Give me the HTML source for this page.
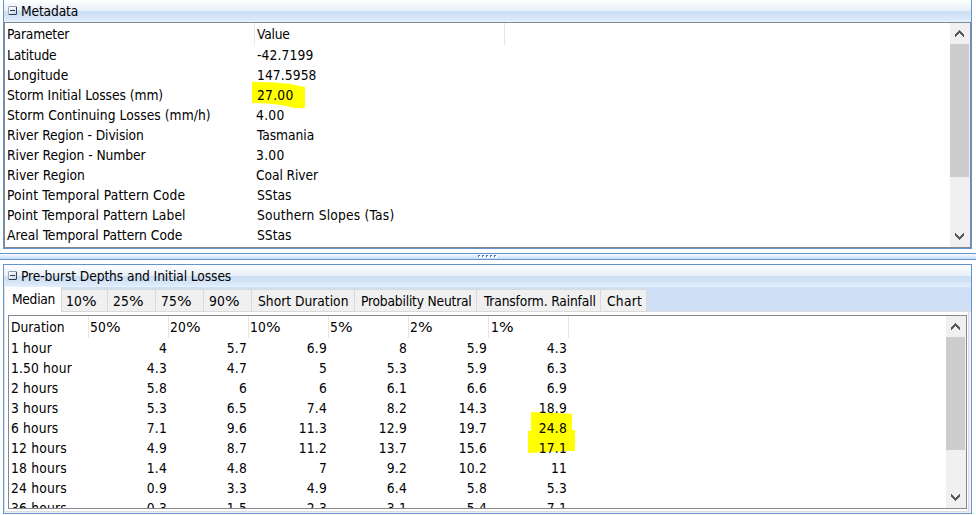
<!DOCTYPE html>
<html lang="en">
<head>
<meta charset="utf-8">
<title>Metadata / Pre-burst Depths and Initial Losses</title>
<style>
html,body{margin:0;padding:0;}
body{width:976px;height:515px;overflow:hidden;background:#fff;position:relative;
  font-family:"DejaVu Sans Condensed","DejaVu Sans","Liberation Sans",sans-serif;font-size:13.7px;font-stretch:condensed;color:#000;letter-spacing:0px;}
div,span,i{box-sizing:border-box;}
.abs{position:absolute;}
.t{position:absolute;white-space:nowrap;line-height:16px;height:16px;}
.r{text-align:right;}
.pc{display:inline-block;transform:scaleX(1.25);transform-origin:0 50%;margin-right:3px;}
.panel{position:absolute;left:3px;width:969px;border:1px solid #6593cf;}
.hdr{position:absolute;left:0;top:0;right:0;height:22px;
 background:linear-gradient(to bottom,#ffffff 0px,#f6f9fd 4px,#e8eff9 11px,#cbdef3 11px,#d3e3f6 16px,#e0ecfb 21px,#e6f1fe 21px,#e6f1fe 22px);}
.ico{position:absolute;left:4px;width:9px;height:9px;}
.grid{position:absolute;background:#fff;overflow:hidden;}
.sb{position:absolute;width:20px;background:#f0f0f0;}
.thumb{position:absolute;left:0;width:19px;background:#cdcdcd;}
.vl{position:absolute;width:1px;background:#e5e5e5;}
.tab{position:absolute;top:289px;height:23px;background:#f0f0f0;border:1px solid #d9d9d9;border-left:none;}
svg{position:absolute;display:block;}
</style>
</head>
<body>

<div class="panel" style="top:-1px;height:250px;background:#fff;">
<div class="hdr"></div>
<svg class="ico" style="top:6px" width="9" height="9" viewBox="0 0 9 9" shape-rendering="crispEdges"><defs><linearGradient id="g3" x1="0" y1="0" x2="1" y2="1"><stop offset="0.2" stop-color="#ffffff"/><stop offset="1" stop-color="#c3cfe3"/></linearGradient></defs><rect x="0" y="0" width="9" height="9" fill="#e9eef6"/><rect x="1" y="1" width="7" height="7" fill="url(#g3)"/><rect x="1" y="0" width="7" height="1" fill="#8e9bb2"/><rect x="0" y="1" width="1" height="7" fill="#98a5bb"/><rect x="8" y="1" width="1" height="7" fill="#33455f"/><rect x="1" y="8" width="7" height="1" fill="#2c3d58"/><rect x="0" y="0" width="1" height="1" fill="#d3dae6"/><rect x="8" y="0" width="1" height="1" fill="#aab4c6"/><rect x="0" y="8" width="1" height="1" fill="#a9b3c5"/><rect x="8" y="8" width="1" height="1" fill="#7b889e"/><rect x="2" y="4" width="5" height="1" fill="#223652"/></svg>
</div>
<div class="t" style="left:21px;top:3px;letter-spacing:-0.15px;">Metadata</div>
<div class="grid" style="left:4px;top:22px;width:967px;height:226px;border:1px solid #828790;">
</div>
<svg style="left:250px;top:80px" width="60" height="30" viewBox="250 80 60 30"><polygon fill="#ffff00" points="252,82 275,82.4 290,84 300,86 305,87 305,108 294,108 284,105.5 268,103.5 252,103"/></svg>
<div class="vl" style="left:254px;top:23px;height:22px;"></div>
<div class="vl" style="left:504px;top:23px;height:22px;"></div>
<div class="t" style="left:7px;top:26px;letter-spacing:-0.2px;">Parameter</div>
<div class="t" style="left:257px;top:26px;letter-spacing:-0.2px;">Value</div>
<div class="t" style="left:7px;top:47px;letter-spacing:-0.15px;">Latitude</div>
<div class="t" style="left:257px;top:47px;letter-spacing:0.15px;">-42.7199</div>
<div class="t" style="left:7px;top:67px;">Longitude</div>
<div class="t" style="left:257px;top:67px;letter-spacing:0.1px;">147.5958</div>
<div class="t" style="left:7px;top:87px;letter-spacing:-0.05px;">Storm Initial Losses (mm)</div>
<div class="t" style="left:257px;top:87px;letter-spacing:0.25px;">27.00</div>
<div class="t" style="left:7px;top:107px;letter-spacing:0.05px;">Storm Continuing Losses (mm/h)</div>
<div class="t" style="left:256px;top:107px;letter-spacing:0.3px;">4.00</div>
<div class="t" style="left:7px;top:127px;letter-spacing:-0.1px;">River Region - Division</div>
<div class="t" style="left:257px;top:127px;letter-spacing:-0.05px;">Tasmania</div>
<div class="t" style="left:7px;top:147px;letter-spacing:-0.05px;">River Region - Number</div>
<div class="t" style="left:256px;top:147px;letter-spacing:0.3px;">3.00</div>
<div class="t" style="left:7px;top:167px;">River Region</div>
<div class="t" style="left:256px;top:167px;letter-spacing:-0.1px;">Coal River</div>
<div class="t" style="left:7px;top:187px;letter-spacing:0.15px;">Point Temporal Pattern Code</div>
<div class="t" style="left:257px;top:187px;">SStas</div>
<div class="t" style="left:7px;top:207px;letter-spacing:0.1px;">Point Temporal Pattern Label</div>
<div class="t" style="left:257px;top:207px;letter-spacing:0.2px;">Southern Slopes (Tas)</div>
<div class="t" style="left:7px;top:227px;">Areal Temporal Pattern Code</div>
<div class="t" style="left:257px;top:227px;">SStas</div>
<div class="sb" style="left:950px;top:23px;height:224px;">
<svg style="left:0px;top:0px" width="20" height="21" viewBox="0 0 20 21" shape-rendering="crispEdges"><path d="M5 11h1v3h-1zM6 10h1v3h-1zM7 9h1v3h-1zM8 8h1v3h-1zM9 7h1v3h-1zM10 8h1v3h-1zM11 9h1v3h-1zM12 10h1v3h-1zM13 11h1v3h-1z" fill="#585858"/></svg>
<div class="thumb" style="top:21px;height:133px;"></div>
<svg style="left:0px;top:203px" width="20" height="21" viewBox="0 0 20 21" shape-rendering="crispEdges"><path d="M5 7h1v3h-1zM6 8h1v3h-1zM7 9h1v3h-1zM8 10h1v3h-1zM9 11h1v3h-1zM10 10h1v3h-1zM11 9h1v3h-1zM12 8h1v3h-1zM13 7h1v3h-1z" fill="#585858"/></svg>
</div>
<div class="abs" style="left:0;top:253px;width:976px;height:7px;border-top:1px solid #6593cf;border-bottom:1px solid #6593cf;background:linear-gradient(to bottom,#f7faff,#c6dcf9);"></div>
<div class="abs" style="left:478px;top:255px;width:2px;height:2px;background:#4674be;"></div><div class="abs" style="left:479px;top:256px;width:2px;height:2px;background:#fff;"></div>
<div class="abs" style="left:482px;top:255px;width:2px;height:2px;background:#4674be;"></div><div class="abs" style="left:483px;top:256px;width:2px;height:2px;background:#fff;"></div>
<div class="abs" style="left:486px;top:255px;width:2px;height:2px;background:#4674be;"></div><div class="abs" style="left:487px;top:256px;width:2px;height:2px;background:#fff;"></div>
<div class="abs" style="left:490px;top:255px;width:2px;height:2px;background:#4674be;"></div><div class="abs" style="left:491px;top:256px;width:2px;height:2px;background:#fff;"></div>
<div class="abs" style="left:494px;top:255px;width:2px;height:2px;background:#4674be;"></div><div class="abs" style="left:495px;top:256px;width:2px;height:2px;background:#fff;"></div>
<div class="panel" style="top:264px;height:250px;background:#cfe0f6;">
<div class="hdr"></div>
<svg class="ico" style="top:6px" width="9" height="9" viewBox="0 0 9 9" shape-rendering="crispEdges"><defs><linearGradient id="g46" x1="0" y1="0" x2="1" y2="1"><stop offset="0.2" stop-color="#ffffff"/><stop offset="1" stop-color="#c3cfe3"/></linearGradient></defs><rect x="0" y="0" width="9" height="9" fill="#e9eef6"/><rect x="1" y="1" width="7" height="7" fill="url(#g46)"/><rect x="1" y="0" width="7" height="1" fill="#8e9bb2"/><rect x="0" y="1" width="1" height="7" fill="#98a5bb"/><rect x="8" y="1" width="1" height="7" fill="#33455f"/><rect x="1" y="8" width="7" height="1" fill="#2c3d58"/><rect x="0" y="0" width="1" height="1" fill="#d3dae6"/><rect x="8" y="0" width="1" height="1" fill="#aab4c6"/><rect x="0" y="8" width="1" height="1" fill="#a9b3c5"/><rect x="8" y="8" width="1" height="1" fill="#7b889e"/><rect x="2" y="4" width="5" height="1" fill="#223652"/></svg>
</div>
<div class="t" style="left:21px;top:268px;letter-spacing:-0.1px;">Pre-burst Depths and Initial Losses</div>
<div class="abs" style="left:4px;top:311px;width:967px;height:202px;background:#fff;border:1px solid #dcdcdc;border-left-color:#e6e4e0;border-right-color:#f8f6f1;border-bottom-color:#f4f2ed;"></div>
<div class="abs" style="left:968px;top:312px;width:2px;height:200px;background:linear-gradient(to right,#dcdcdc 0,#dcdcdc 1px,#eeeeee 1px,#eeeeee 2px);"></div>
<div class="abs" style="left:5px;top:511px;width:965px;height:1px;background:#dcdcdc;"></div>
<div class="abs" style="left:4px;top:287px;width:58px;height:25px;background:#fff;border-left:1px solid #e3e3e3;border-right:1px solid #d9d9d9;"></div>
<div class="t" style="left:12px;top:291px;letter-spacing:-0.3px;">Median</div>
<div class="tab" style="left:62px;width:46px;"></div>
<div class="t" style="left:66px;top:293px;letter-spacing:0.15px;">10<span class="pc">%</span></div>
<div class="tab" style="left:108px;width:48px;"></div>
<div class="t" style="left:113px;top:293px;letter-spacing:0.15px;">25<span class="pc">%</span></div>
<div class="tab" style="left:156px;width:48px;"></div>
<div class="t" style="left:161px;top:293px;letter-spacing:0.15px;">75<span class="pc">%</span></div>
<div class="tab" style="left:204px;width:48px;"></div>
<div class="t" style="left:209px;top:293px;letter-spacing:0.15px;">90<span class="pc">%</span></div>
<div class="tab" style="left:252px;width:103px;"></div>
<div class="t" style="left:258px;top:293px;">Short Duration</div>
<div class="tab" style="left:355px;width:122px;"></div>
<div class="t" style="left:361px;top:293px;letter-spacing:-0.2px;">Probability Neutral</div>
<div class="tab" style="left:477px;width:124px;"></div>
<div class="t" style="left:484px;top:293px;letter-spacing:-0.15px;">Transform. Rainfall</div>
<div class="tab" style="left:601px;width:46px;"></div>
<div class="t" style="left:607px;top:293px;letter-spacing:0.25px;">Chart</div>
<div class="grid" style="left:8px;top:315px;width:959px;height:194px;border:1px solid #828790;">
</div>
<svg style="left:526px;top:410px" width="52" height="45" viewBox="526 410 52 45"><polygon fill="#ffff00" points="531,412 567,413.5 572,414 572,430 575,430 575,450.7 548,452 528,453 528,431 531,431"/></svg>
<div class="vl" style="left:88px;top:316px;height:22px;"></div>
<div class="vl" style="left:168px;top:316px;height:22px;"></div>
<div class="vl" style="left:248px;top:316px;height:22px;"></div>
<div class="vl" style="left:328px;top:316px;height:22px;"></div>
<div class="vl" style="left:408px;top:316px;height:22px;"></div>
<div class="vl" style="left:488px;top:316px;height:22px;"></div>
<div class="vl" style="left:568px;top:316px;height:22px;"></div>
<div class="t" style="left:11px;top:319px;">Duration</div>
<div class="t" style="left:90px;top:319px;letter-spacing:0.15px;">50<span class="pc">%</span></div>
<div class="t" style="left:170px;top:319px;letter-spacing:0.15px;">20<span class="pc">%</span></div>
<div class="t" style="left:250px;top:319px;letter-spacing:0.15px;">10<span class="pc">%</span></div>
<div class="t" style="left:330px;top:319px;letter-spacing:0.15px;">5<span class="pc">%</span></div>
<div class="t" style="left:410px;top:319px;letter-spacing:0.15px;">2<span class="pc">%</span></div>
<div class="t" style="left:491px;top:319px;letter-spacing:0.15px;">1<span class="pc">%</span></div>
<div class="abs" style="left:9px;top:316px;width:937px;height:192px;overflow:hidden;">
<div class="t" style="left:2px;top:24px;letter-spacing:0.15px;">1 hour</div>
<div class="t r" style="left:78px;width:80px;top:24px;letter-spacing:0.2px;">4</div>
<div class="t r" style="left:158px;width:80px;top:24px;letter-spacing:0.2px;">5.7</div>
<div class="t r" style="left:238px;width:80px;top:24px;letter-spacing:0.2px;">6.9</div>
<div class="t r" style="left:318px;width:80px;top:24px;letter-spacing:0.2px;">8</div>
<div class="t r" style="left:398px;width:80px;top:24px;letter-spacing:0.2px;">5.9</div>
<div class="t r" style="left:478px;width:80px;top:24px;letter-spacing:0.2px;">4.3</div>
<div class="t" style="left:2px;top:44px;letter-spacing:0.15px;">1.50 hour</div>
<div class="t r" style="left:78px;width:80px;top:44px;letter-spacing:0.2px;">4.3</div>
<div class="t r" style="left:158px;width:80px;top:44px;letter-spacing:0.2px;">4.7</div>
<div class="t r" style="left:238px;width:80px;top:44px;letter-spacing:0.2px;">5</div>
<div class="t r" style="left:318px;width:80px;top:44px;letter-spacing:0.2px;">5.3</div>
<div class="t r" style="left:398px;width:80px;top:44px;letter-spacing:0.2px;">5.9</div>
<div class="t r" style="left:478px;width:80px;top:44px;letter-spacing:0.2px;">6.3</div>
<div class="t" style="left:2px;top:64px;letter-spacing:0.15px;">2 hours</div>
<div class="t r" style="left:78px;width:80px;top:64px;letter-spacing:0.2px;">5.8</div>
<div class="t r" style="left:158px;width:80px;top:64px;letter-spacing:0.2px;">6</div>
<div class="t r" style="left:238px;width:80px;top:64px;letter-spacing:0.2px;">6</div>
<div class="t r" style="left:318px;width:80px;top:64px;letter-spacing:0.2px;">6.1</div>
<div class="t r" style="left:398px;width:80px;top:64px;letter-spacing:0.2px;">6.6</div>
<div class="t r" style="left:478px;width:80px;top:64px;letter-spacing:0.2px;">6.9</div>
<div class="t" style="left:2px;top:84px;letter-spacing:0.15px;">3 hours</div>
<div class="t r" style="left:78px;width:80px;top:84px;letter-spacing:0.2px;">5.3</div>
<div class="t r" style="left:158px;width:80px;top:84px;letter-spacing:0.2px;">6.5</div>
<div class="t r" style="left:238px;width:80px;top:84px;letter-spacing:0.2px;">7.4</div>
<div class="t r" style="left:318px;width:80px;top:84px;letter-spacing:0.2px;">8.2</div>
<div class="t r" style="left:398px;width:80px;top:84px;letter-spacing:0.2px;">14.3</div>
<div class="t r" style="left:478px;width:80px;top:84px;letter-spacing:0.2px;">18.9</div>
<div class="t" style="left:2px;top:104px;letter-spacing:0.15px;">6 hours</div>
<div class="t r" style="left:78px;width:80px;top:104px;letter-spacing:0.2px;">7.1</div>
<div class="t r" style="left:158px;width:80px;top:104px;letter-spacing:0.2px;">9.6</div>
<div class="t r" style="left:238px;width:80px;top:104px;letter-spacing:0.2px;">11.3</div>
<div class="t r" style="left:318px;width:80px;top:104px;letter-spacing:0.2px;">12.9</div>
<div class="t r" style="left:398px;width:80px;top:104px;letter-spacing:0.2px;">19.7</div>
<div class="t r" style="left:478px;width:80px;top:104px;letter-spacing:0.2px;">24.8</div>
<div class="t" style="left:2px;top:124px;letter-spacing:0.2px;">12 hours</div>
<div class="t r" style="left:78px;width:80px;top:124px;letter-spacing:0.2px;">4.9</div>
<div class="t r" style="left:158px;width:80px;top:124px;letter-spacing:0.2px;">8.7</div>
<div class="t r" style="left:238px;width:80px;top:124px;letter-spacing:0.2px;">11.2</div>
<div class="t r" style="left:318px;width:80px;top:124px;letter-spacing:0.2px;">13.7</div>
<div class="t r" style="left:398px;width:80px;top:124px;letter-spacing:0.2px;">15.6</div>
<div class="t r" style="left:478px;width:80px;top:124px;letter-spacing:0.2px;">17.1</div>
<div class="t" style="left:2px;top:144px;letter-spacing:0.2px;">18 hours</div>
<div class="t r" style="left:78px;width:80px;top:144px;letter-spacing:0.2px;">1.4</div>
<div class="t r" style="left:158px;width:80px;top:144px;letter-spacing:0.2px;">4.8</div>
<div class="t r" style="left:238px;width:80px;top:144px;letter-spacing:0.2px;">7</div>
<div class="t r" style="left:318px;width:80px;top:144px;letter-spacing:0.2px;">9.2</div>
<div class="t r" style="left:398px;width:80px;top:144px;letter-spacing:0.2px;">10.2</div>
<div class="t r" style="left:478px;width:80px;top:144px;letter-spacing:0.2px;">11</div>
<div class="t" style="left:2px;top:164px;letter-spacing:0.2px;">24 hours</div>
<div class="t r" style="left:78px;width:80px;top:164px;letter-spacing:0.2px;">0.9</div>
<div class="t r" style="left:158px;width:80px;top:164px;letter-spacing:0.2px;">3.3</div>
<div class="t r" style="left:238px;width:80px;top:164px;letter-spacing:0.2px;">4.9</div>
<div class="t r" style="left:318px;width:80px;top:164px;letter-spacing:0.2px;">6.4</div>
<div class="t r" style="left:398px;width:80px;top:164px;letter-spacing:0.2px;">5.8</div>
<div class="t r" style="left:478px;width:80px;top:164px;letter-spacing:0.2px;">5.3</div>
<div class="t" style="left:2px;top:184px;letter-spacing:0.2px;">36 hours</div>
<div class="t r" style="left:78px;width:80px;top:184px;letter-spacing:0.2px;">0.3</div>
<div class="t r" style="left:158px;width:80px;top:184px;letter-spacing:0.2px;">1.5</div>
<div class="t r" style="left:238px;width:80px;top:184px;letter-spacing:0.2px;">2.3</div>
<div class="t r" style="left:318px;width:80px;top:184px;letter-spacing:0.2px;">3.1</div>
<div class="t r" style="left:398px;width:80px;top:184px;letter-spacing:0.2px;">5.4</div>
<div class="t r" style="left:478px;width:80px;top:184px;letter-spacing:0.2px;">7.1</div>
</div>
<div class="sb" style="left:946px;top:316px;height:192px;">
<svg style="left:0px;top:0px" width="20" height="21" viewBox="0 0 20 21" shape-rendering="crispEdges"><path d="M5 11h1v3h-1zM6 10h1v3h-1zM7 9h1v3h-1zM8 8h1v3h-1zM9 7h1v3h-1zM10 8h1v3h-1zM11 9h1v3h-1zM12 10h1v3h-1zM13 11h1v3h-1z" fill="#585858"/></svg>
<div class="thumb" style="top:21px;height:113px;"></div>
<svg style="left:0px;top:171px" width="20" height="21" viewBox="0 0 20 21" shape-rendering="crispEdges"><path d="M5 7h1v3h-1zM6 8h1v3h-1zM7 9h1v3h-1zM8 10h1v3h-1zM9 11h1v3h-1zM10 10h1v3h-1zM11 9h1v3h-1zM12 8h1v3h-1zM13 7h1v3h-1z" fill="#585858"/></svg>
</div>
</body>
</html>
